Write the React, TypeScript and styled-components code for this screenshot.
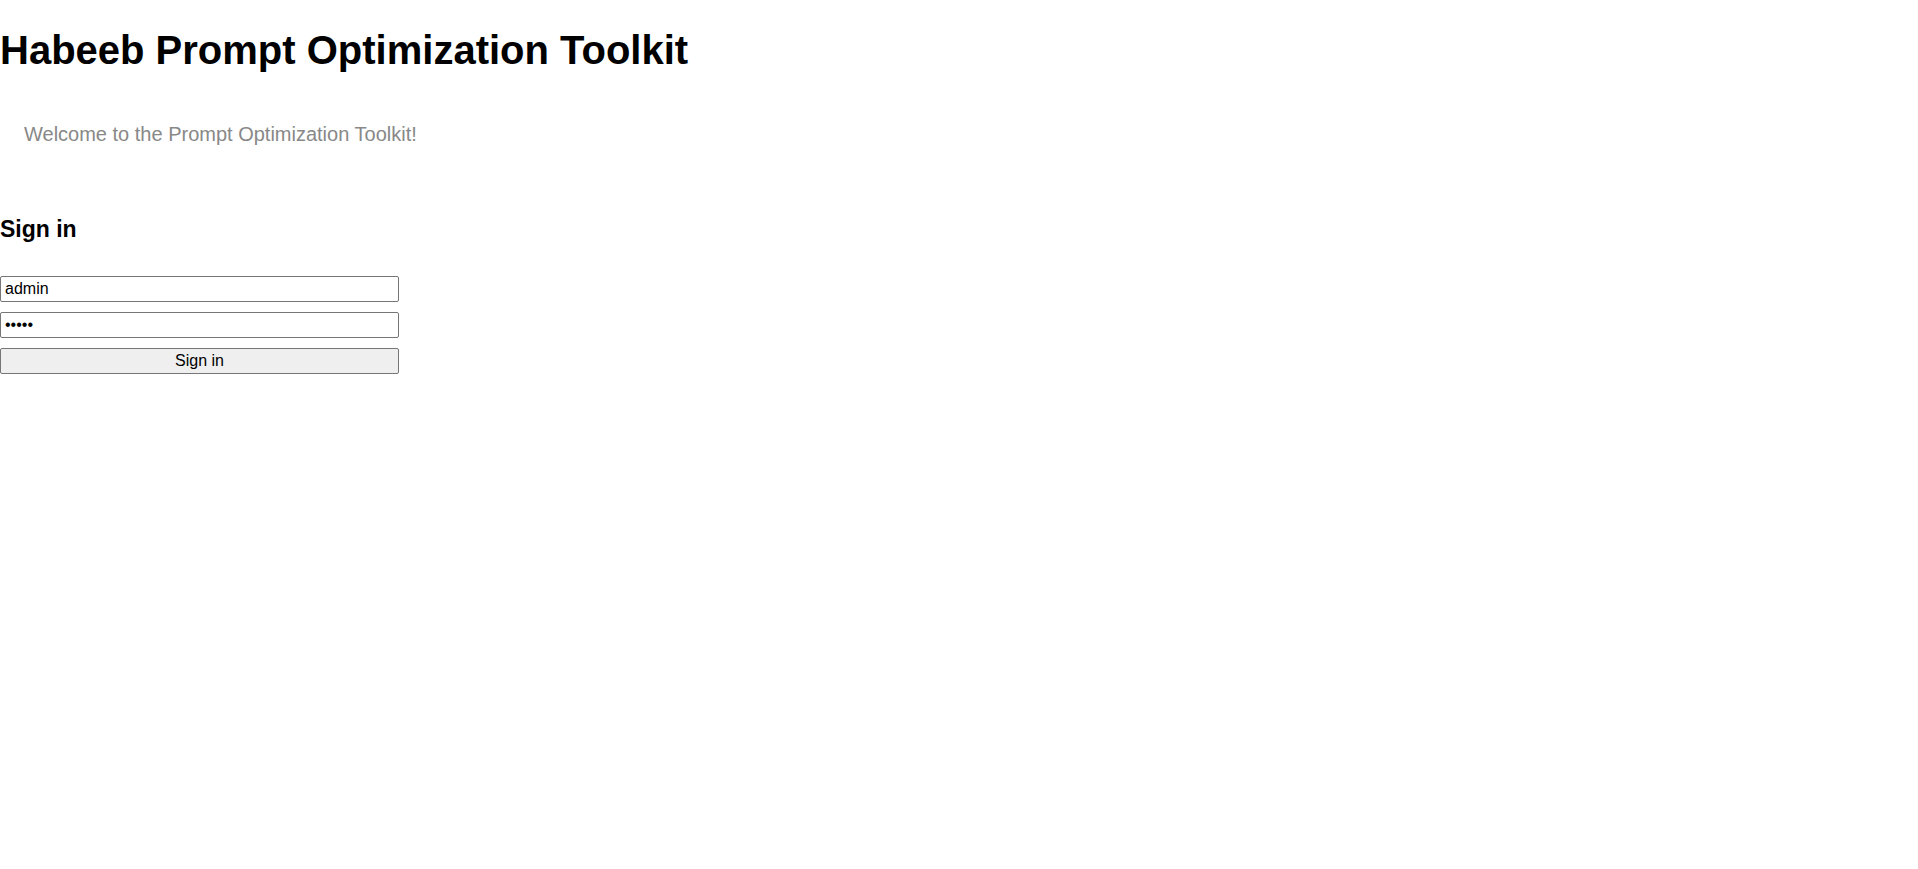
import React from 'react'
import styled, { createGlobalStyle } from 'styled-components'

const GlobalStyle = createGlobalStyle`
  html, body {
    margin: 0;
    padding: 0;
    background: #ffffff;
    font-family: "Liberation Sans", Arial, sans-serif;
    color: #000000;
  }
`

const Page = styled.div`
  display: flex;
  flex-direction: column;
  align-items: flex-start;
`

const Title = styled.h1`
  font-size: 40px;
  font-weight: 700;
  margin: 27px 0 0;
  line-height: 46px;
`

const Welcome = styled.p`
  font-size: 20px;
  color: #888888;
  margin: 50px 0 0;
  padding-left: 24px;
  line-height: 23px;
`

const Heading = styled.h3`
  font-size: 23px;
  font-weight: 700;
  margin: 70px 0 0;
  line-height: 26px;
`

const Form = styled.form`
  display: flex;
  flex-direction: column;
  gap: 10px;
  width: 399px;
  margin-top: 34px;
`

const Field = styled.input`
  box-sizing: border-box;
  width: 100%;
  height: 26px;
  padding: 1px 4px;
  font-family: "Liberation Sans", Arial, sans-serif;
  font-size: 16px;
  border: 1px solid #767676;
  border-radius: 2px;
  background: #ffffff;
  color: #000000;
  outline: none;
`

const Submit = styled.button`
  box-sizing: border-box;
  width: 100%;
  height: 26px;
  font-family: "Liberation Sans", Arial, sans-serif;
  font-size: 16px;
  border: 1px solid #767676;
  border-radius: 2px;
  background: #efefef;
  color: #000000;
`

export default function App() {
  return (
    <>
      <GlobalStyle />
      <Page>
        <Title>Habeeb Prompt Optimization Toolkit</Title>
        <Welcome>Welcome to the Prompt Optimization Toolkit!</Welcome>
        <Heading>Sign in</Heading>
        <Form onSubmit={(e) => e.preventDefault()}>
          <Field type="text" defaultValue="admin" />
          <Field type="password" defaultValue="admin" />
          <Submit type="submit">Sign in</Submit>
        </Form>
      </Page>
    </>
  )
}
